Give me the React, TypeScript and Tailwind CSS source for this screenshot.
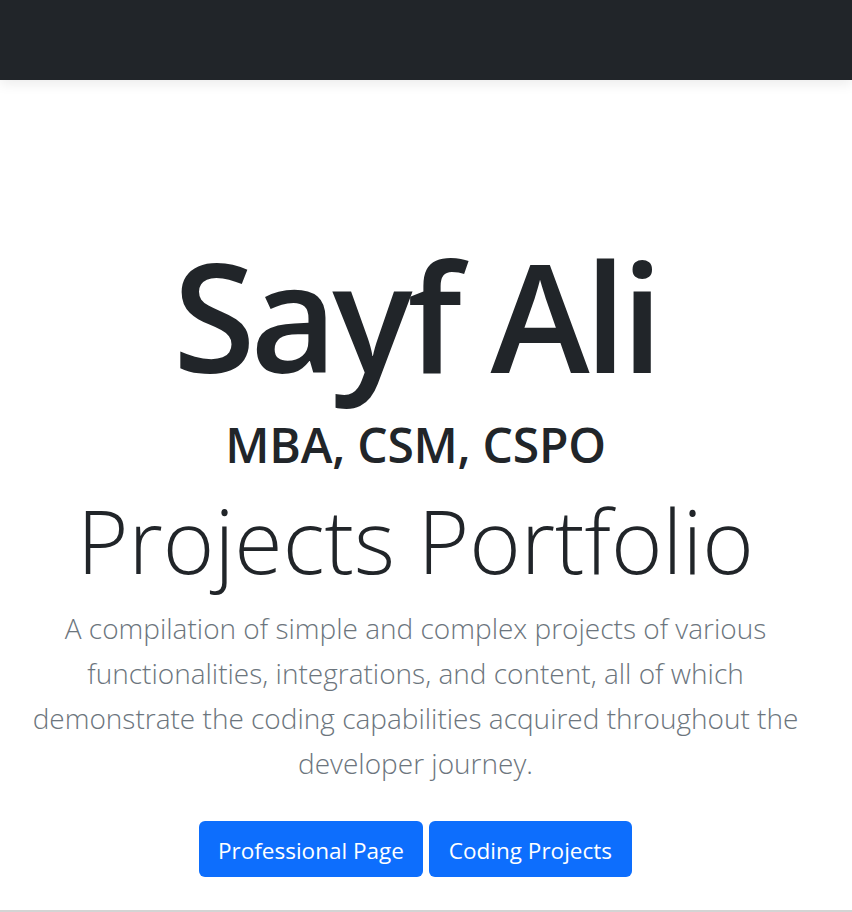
const App: React.FC = () => {
  return (
    <div className="min-h-screen bg-white font-['Open_Sans',sans-serif] text-[#212529]">
      {/* navbar */}
      <nav className="relative z-10 h-20 w-full bg-[#212529] shadow-[0_4px_12px_rgba(0,0,0,0.08)]" />

      {/* hero */}
      <header className="flex flex-col items-center pl-4 pr-[37px] pt-[160px] text-center">
        <h1 className="text-[150px] font-semibold leading-[150px] tracking-[-0.034em]">
          Sayf Ali
        </h1>
        <h2 className="mt-[31px] text-[48px] font-semibold leading-[48px] tracking-[-0.005em]">
          MBA, CSM, CSPO
        </h2>
        <h3 className="mt-[27px] text-[88px] font-light leading-[88px]">
          Projects Portfolio
        </h3>
        <p className="mt-[22px] text-[28px] font-light leading-[45px] text-[#6c757d]">
          A compilation of simple and complex projects of various
          <br />
          functionalities, integrations, and content, all of which
          <br />
          demonstrate the coding capabilities acquired throughout the
          <br />
          developer journey.
        </p>
        <div className="mt-[35px] flex gap-[6px]">
          <a className="rounded-md bg-[#0d6efd] pb-[8px] pl-[19px] pr-[19px] pt-[12px] text-[22.5px] leading-[36px] text-white">
            Professional Page
          </a>
          <a className="rounded-md bg-[#0d6efd] pb-[8px] pl-[20px] pr-[20px] pt-[12px] text-[22.5px] leading-[36px] text-white">
            Coding Projects
          </a>
        </div>
      </header>

      <section className="mt-[33px] h-40 w-full border-t-2 border-[#d4d4d4] bg-white" />
    </div>
  );
};

export default App;
